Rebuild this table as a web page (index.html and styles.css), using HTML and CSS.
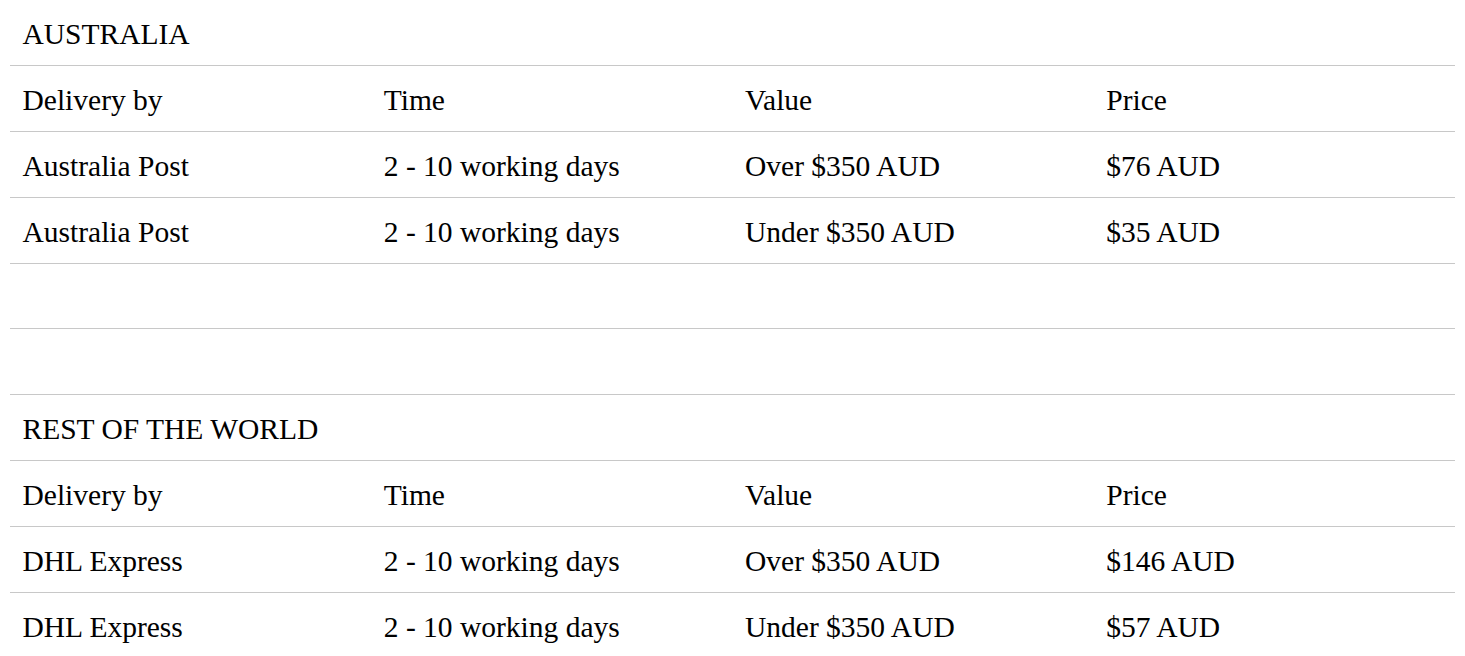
FILE: index.html
```html
<!DOCTYPE html>
<html>
<head>
<meta charset="utf-8">
<link rel="stylesheet" href="styles.css">
</head>
<body>
<table class="shipping">
  <tbody>
    <tr><td colspan="4">AUSTRALIA</td></tr>
    <tr><td>Delivery by</td><td>Time</td><td>Value</td><td>Price</td></tr>
    <tr><td>Australia Post</td><td>2 - 10 working days</td><td>Over $350 AUD</td><td>$76 AUD</td></tr>
    <tr><td>Australia Post</td><td>2 - 10 working days</td><td>Under $350 AUD</td><td>$35 AUD</td></tr>
    <tr><td colspan="4">&nbsp;</td></tr>
    <tr><td colspan="4">&nbsp;</td></tr>
    <tr><td colspan="4">REST OF THE WORLD</td></tr>
    <tr><td>Delivery by</td><td>Time</td><td>Value</td><td>Price</td></tr>
    <tr><td>DHL Express</td><td>2 - 10 working days</td><td>Over $350 AUD</td><td>$146 AUD</td></tr>
    <tr><td>DHL Express</td><td>2 - 10 working days</td><td>Under $350 AUD</td><td>$57 AUD</td></tr>
  </tbody>
</table>
</body>
</html>
```
FILE: styles.css
```css
html, body {
  margin: 0;
  padding: 0;
  background: #ffffff;
}
body {
  padding: 0 10px;
  font-family: "Liberation Serif", "Times New Roman", serif;
  font-size: 29.5px;
  color: #000000;
}
.shipping {
  width: 100%;
  border-collapse: collapse;
  table-layout: fixed;
}
.shipping td {
  width: 25%;
  padding: 18px 12.5px 13.875px 12.5px;
  line-height: 33px;
  border-bottom: 1px solid #c8c8c8;
  text-align: left;
  vertical-align: middle;
  white-space: nowrap;
}
```
